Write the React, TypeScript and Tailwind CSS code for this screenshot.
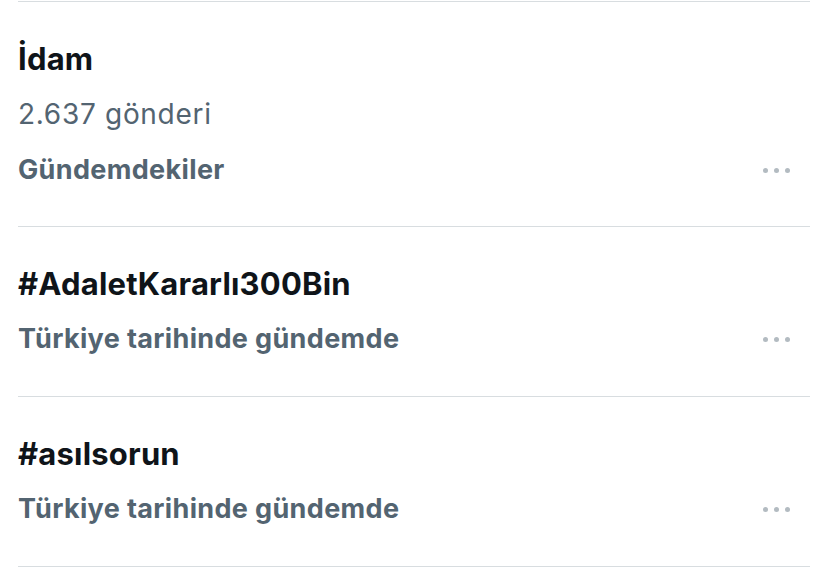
import React from 'react';

type Trend = {
  title: string;
  posts?: string;
  context: string;
};

const TRENDS: Trend[] = [
  { title: 'İdam', posts: '2.637 gönderi', context: 'Gündemdekiler' },
  { title: '#AdaletKararlı300Bin', context: 'Türkiye tarihinde gündemde' },
  { title: '#asılsorun', context: 'Türkiye tarihinde gündemde' },
];

const MoreDots: React.FC = () => (
  <div className="mt-[2px] flex items-center gap-[6px] pr-[20px]">
    <span className="block h-[5px] w-[5px] rounded-full bg-[#b3bbc1]" />
    <span className="block h-[5px] w-[5px] rounded-full bg-[#b3bbc1]" />
    <span className="block h-[5px] w-[5px] rounded-full bg-[#b3bbc1]" />
  </div>
);

const TrendRow: React.FC<{ trend: Trend }> = ({ trend }) => (
  <div
    className={`border-t border-[#d8dde0] pt-[37px] ${
      trend.posts ? 'pb-[34px]' : 'pb-[35px]'
    }`}
  >
    <div className="text-[31px] font-bold leading-[40px] tracking-[0.2px] text-[#0f1419]">
      {trend.title}
    </div>
    {trend.posts && (
      <div className="mt-[13px] text-[28px] leading-[45px] tracking-[0.7px] text-[#536471]">
        {trend.posts}
      </div>
    )}
    <div
      className={`flex items-center justify-between ${
        trend.posts ? 'mt-[10px]' : 'mt-[12px]'
      }`}
    >
      <span className="text-[27px] font-bold leading-[45px] tracking-[0.35px] text-[#536471]">
        {trend.context}
      </span>
      <MoreDots />
    </div>
  </div>
);

const App: React.FC = () => {
  return (
    <div
      className="h-[571px] w-[828px] overflow-hidden bg-white pt-px"
      style={{ fontFamily: 'Inter, "Noto Sans", sans-serif' }}
    >
      <div className="mx-[18px]">
        {TRENDS.map((t) => (
          <TrendRow key={t.title} trend={t} />
        ))}
        <div className="border-t border-[#d8dde0]" />
      </div>
    </div>
  );
};

export default App;
